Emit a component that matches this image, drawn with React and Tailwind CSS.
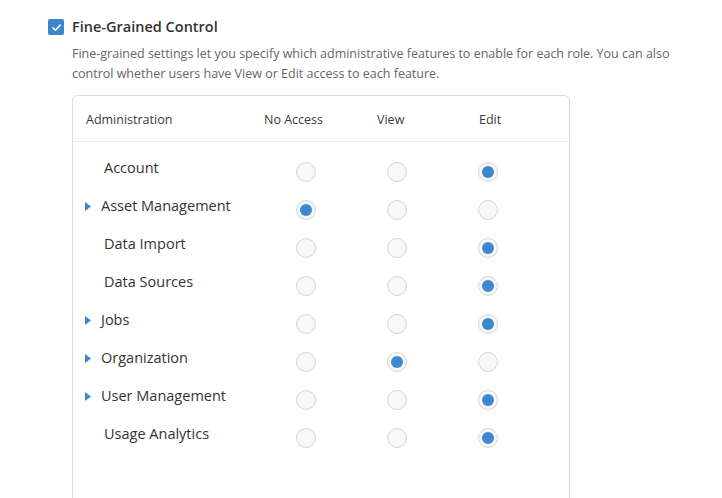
import React from "react";

const rows = [
    { name: "Account", expandable: false, value: 2 },
    { name: "Asset Management", expandable: true, value: 0 },
    { name: "Data Import", expandable: false, value: 2 },
    { name: "Data Sources", expandable: false, value: 2 },
    { name: "Jobs", expandable: true, value: 2 },
    { name: "Organization", expandable: true, value: 1 },
    { name: "User Management", expandable: true, value: 2 },
    { name: "Usage Analytics", expandable: false, value: 2 },
];

function Radio({ checked }) {
    return (
        <span className="w-[20px] h-[20px] rounded-full border border-[#d6d6d6] bg-[#f8f8f8] flex items-center justify-center">
            {checked && <span className="w-[12px] h-[12px] rounded-full bg-[#3d88cf]" />}
        </span>
    );
}

export default function App() {
    return (
        <div className="w-[722px] h-[498px] overflow-hidden bg-white pl-[48px] pt-[19px] font-['Open_Sans',sans-serif]">
            {/* Title */}
            <div className="flex items-center gap-[8px]">
                <span className="w-[16px] h-[16px] rounded-[2px] bg-[#3b86cc] flex items-center justify-center">
                    <svg width="11" height="11" viewBox="0 0 12 12" fill="none">
                        <path d="M2 6.3 L4.8 9 L10 3.3" stroke="white" strokeWidth="1.8" strokeLinecap="round" strokeLinejoin="round" />
                    </svg>
                </span>
                <p className="text-[14.5px] font-semibold text-[#333] leading-[16px]">Fine-Grained Control</p>
            </div>

            {/* Description */}
            <p className="ml-[24px] mt-[9px] text-[12.5px] leading-[20px] text-[#666] w-[620px]">
                Fine-grained settings let you specify which administrative features to enable for each role. You can also control whether users have View or Edit access to each feature.
            </p>

            {/* Permission table */}
            <div className="ml-[24px] mt-[11px] w-[498px] h-[420px] border border-[#dcdcdc] rounded-[6px]">
                <div className="flex items-center h-[46px] pt-[3px] border-b border-[#ececec] text-[12.5px] font-medium text-[#3a3a3a]">
                    <span className="w-[191px] pl-[13px]">Administration</span>
                    <span className="w-[113px]">No Access</span>
                    <span className="w-[102px]">View</span>
                    <span>Edit</span>
                </div>

                <div className="pt-[11px]">
                    {rows.map((row) => (
                        <div key={row.name} className="flex items-center h-[38px]">
                            <div className="w-[223px] flex items-center -mt-2 text-[14.5px] text-[#333]">
                                {row.expandable ? (
                                    <>
                                        <svg className="ml-[12px] mr-[10px]" width="6" height="9" viewBox="0 0 6 9">
                                            <path d="M0 0 L6 4.5 L0 9 Z" fill="#3d88cf" />
                                        </svg>
                                        <span>{row.name}</span>
                                    </>
                                ) : (
                                    <span className="pl-[31px]">{row.name}</span>
                                )}
                            </div>
                            {[0, 1, 2].map((i) => (
                                <div key={i} className="w-[91px]">
                                    <Radio checked={row.value === i} />
                                </div>
                            ))}
                        </div>
                    ))}
                </div>
            </div>
        </div>
    );
}
